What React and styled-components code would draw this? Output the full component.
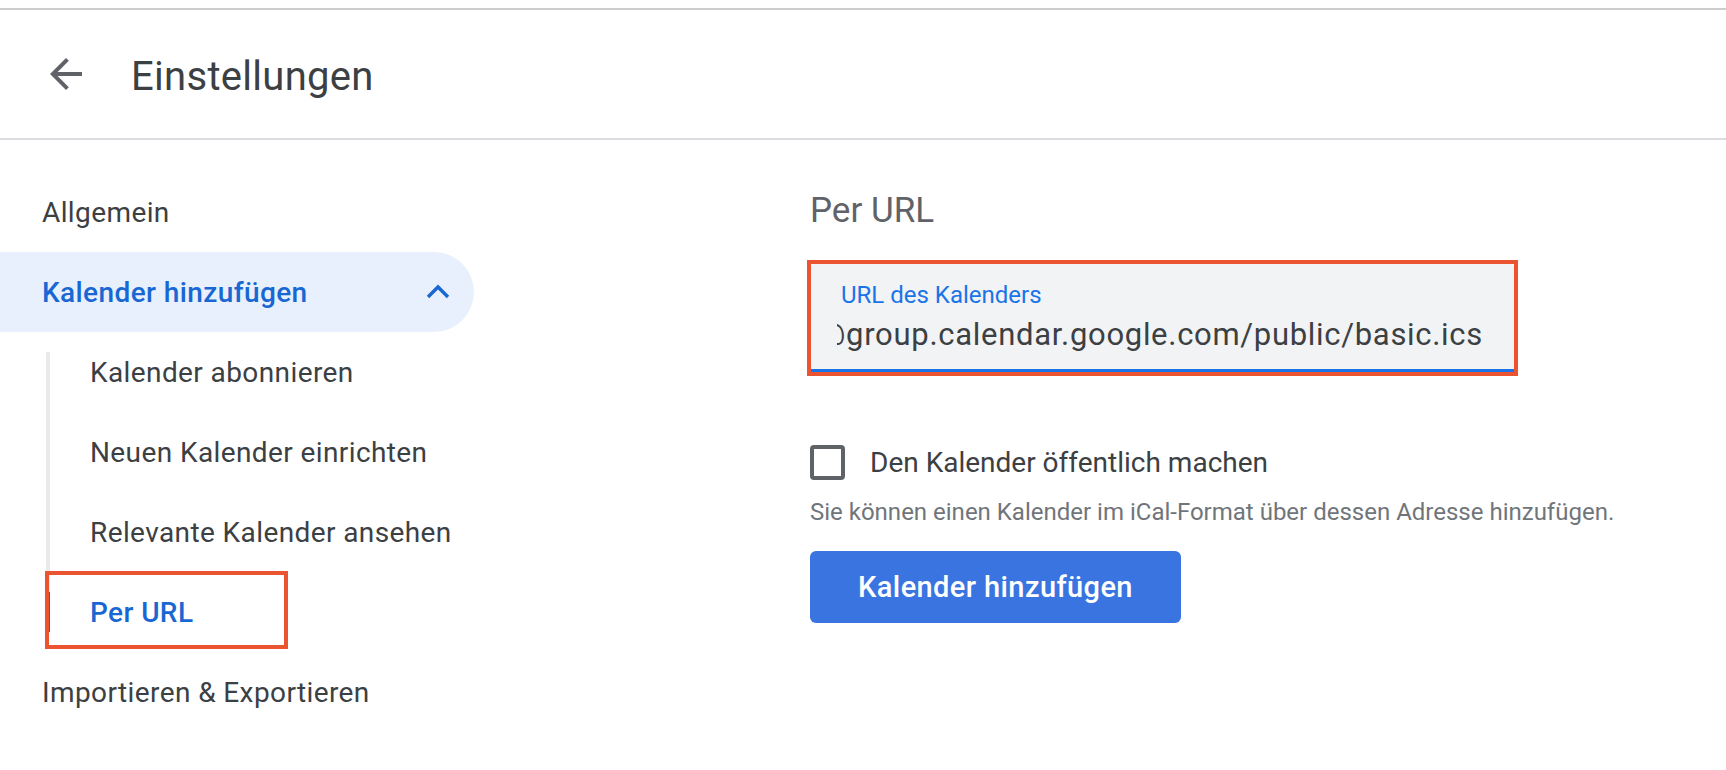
import styled, { createGlobalStyle } from 'styled-components';

const GlobalStyle = createGlobalStyle`
	body {
		margin: 0;
		background: #fff;
		font-family: Roboto, "Noto Sans", Arial, sans-serif;
		color: #3c4043;
	}
`;

const Header = styled.header`
	display: flex;
	align-items: center;
	gap: 41px;
	height: 128px;
	margin-top: 8px;
	padding-left: 42px;
	border-top: 2px solid #cdcdcd;
	border-bottom: 2px solid #dadce0;
`;

const BackButton = styled.button`
	display: flex;
	padding: 0;
	border: 0;
	background: none;
	color: #5f6368;
`;

const Title = styled.h1`
	margin: 5px 0 0;
	font-size: 40px;
	font-weight: 400;
	letter-spacing: 0.3px;
	color: #3c4043;
`;

const Body = styled.div`
	display: flex;
`;

const Sidebar = styled.nav`
	width: 474px;
	padding-top: 32px;
	flex-shrink: 0;
`;

const NavItem = styled.div`
	display: flex;
	align-items: center;
	justify-content: space-between;
	height: 80px;
	padding: 0 24px 0 42px;
	font-size: 28px;
	letter-spacing: 0.4px;
	color: ${ ( p ) => ( p.$open ? '#1967d2' : '#3c4043' ) };
	font-weight: ${ ( p ) => ( p.$open ? 500 : 400 ) };
	background: ${ ( p ) => ( p.$open ? '#e8f0fe' : 'transparent' ) };
	border-radius: 0 40px 40px 0;
`;

const SubList = styled.div`
	position: relative;
	margin-left: 46px;
	&::before {
		content: '';
		position: absolute;
		left: 0;
		top: 20px;
		bottom: 20px;
		width: 4px;
		background: #e8eaed;
	}
`;

const SubItem = styled.div`
	position: relative;
	display: flex;
	align-items: center;
	width: 242px;
	height: 80px;
	padding-left: 44px;
	box-sizing: border-box;
	font-size: 28px;
	letter-spacing: 0.4px;
	color: ${ ( p ) => ( p.$active ? '#1967d2' : '#3c4043' ) };
	font-weight: ${ ( p ) => ( p.$active ? 500 : 400 ) };
	white-space: nowrap;
	${ ( p ) => p.$active && `
		&::before {
			content: '';
			position: absolute;
			left: 0;
			top: 20px;
			bottom: 20px;
			width: 4px;
			background: #1967d2;
		}
	` }
	${ ( p ) => p.$marked && `
		&::after {
			content: '';
			position: absolute;
			left: -1px;
			top: -1px;
			right: 0;
			bottom: 3px;
			border: 4px solid #ea5430;
		}
	` }
`;

const Content = styled.main`
	display: flex;
	flex-direction: column;
	align-items: flex-start;
	margin-left: 336px;
	padding-top: 51px;
`;

const SectionTitle = styled.h2`
	margin: 0 0 29px;
	font-size: 35px;
	line-height: 40px;
	font-weight: 400;
	color: #5f6368;
`;

const Marked = styled.div`
	margin-left: -3px;
	border: 4px solid #ea5430;
`;

const Field = styled.div`
	width: 703px;
	height: 108px;
	box-sizing: border-box;
	padding: 19px 31px 0 30px;
	background: #f1f3f4;
	border-radius: 4px 4px 0 0;
	border-bottom: 3px solid #1a73e8;
`;

const FieldLabel = styled.div`
	font-size: 24px;
	line-height: 24px;
	color: #1a73e8;
`;

const FieldValue = styled.div`
	display: flex;
	justify-content: flex-end;
	overflow: hidden;
	margin: 10px 0 0 -4px;
	font-size: 31px;
	line-height: 36px;
	letter-spacing: 0.7px;
	color: #3c4043;
	white-space: nowrap;
`;

const CheckRow = styled.label`
	display: flex;
	align-items: center;
	gap: 25px;
	margin-top: 69px;
	font-size: 28px;
	color: #3c4043;
`;

const Box = styled.span`
	width: 35px;
	height: 35px;
	box-sizing: border-box;
	border: 4px solid #5f6368;
	border-radius: 4px;
`;

const Hint = styled.p`
	margin: 18px 0 0;
	font-size: 24px;
	line-height: 28px;
	color: #70757a;
`;

const PrimaryButton = styled.button`
	margin-top: 25px;
	width: 371px;
	height: 72px;
	border: 0;
	border-radius: 6px;
	background: #3a74e0;
	color: #fff;
	font-family: inherit;
	font-size: 29px;
	font-weight: 500;
	letter-spacing: 0.4px;
`;

const subItems = [
	'Kalender abonnieren',
	'Neuen Kalender einrichten',
	'Relevante Kalender ansehen',
];

const App = () => (
	<>
		<GlobalStyle />
		<Header>
			<BackButton aria-label="Zurück">
				<svg width="48" height="48" viewBox="0 0 24 24" fill="currentColor">
					<path d="M20 11H7.83l5.59-5.59L12 4l-8 8 8 8 1.41-1.41L7.83 13H20v-2z" />
				</svg>
			</BackButton>
			<Title>Einstellungen</Title>
		</Header>
		<Body>
			<Sidebar>
				<NavItem>Allgemein</NavItem>
				<NavItem $open>
					Kalender hinzufügen
					<svg width="24" height="16" viewBox="0 0 24 16" fill="none" stroke="currentColor" strokeWidth="3.4">
						<polyline points="2,13 12,3 22,13" />
					</svg>
				</NavItem>
				<SubList>
					{ subItems.map( ( label ) => (
						<SubItem key={ label }>{ label }</SubItem>
					) ) }
					<SubItem $active $marked>Per URL</SubItem>
				</SubList>
				<NavItem>Importieren &amp; Exportieren</NavItem>
			</Sidebar>
			<Content>
				<SectionTitle>Per URL</SectionTitle>
				<Marked>
					<Field>
						<FieldLabel>URL des Kalenders</FieldLabel>
						<FieldValue>
							<span>https://calendar.google.com/calendar/ical/de.german#holiday@group.calendar.google.com/public/basic.ics</span>
						</FieldValue>
					</Field>
				</Marked>
				<CheckRow>
					<Box />
					Den Kalender öffentlich machen
				</CheckRow>
				<Hint>Sie können einen Kalender im iCal-Format über dessen Adresse hinzufügen.</Hint>
				<PrimaryButton>Kalender hinzufügen</PrimaryButton>
			</Content>
		</Body>
	</>
);

export default App;
